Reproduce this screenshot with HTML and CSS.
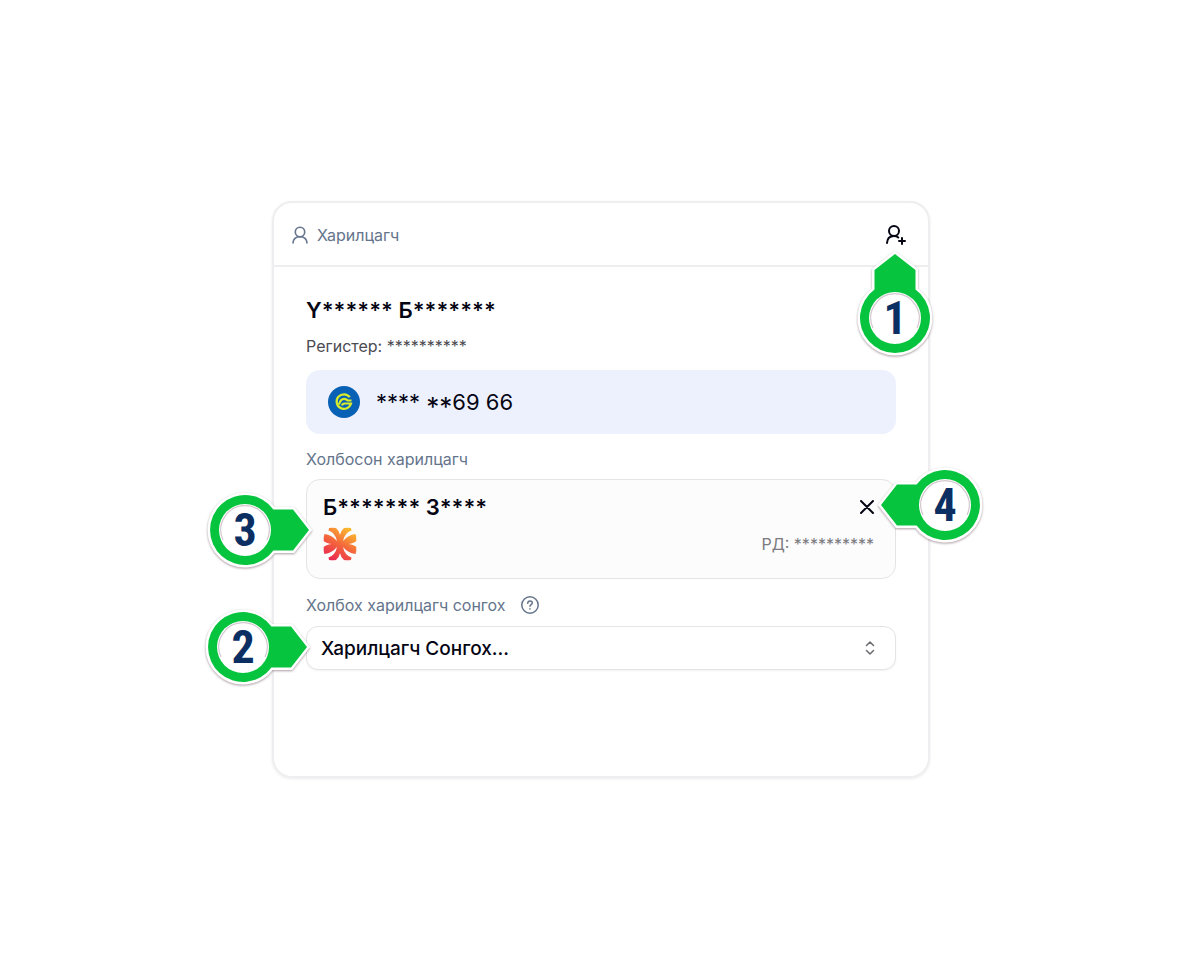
FILE: index.html
```html
<!DOCTYPE html>
<html lang="mn">
<head>
<meta charset="utf-8">
<meta name="viewport" content="width=device-width, initial-scale=1">
<title>Харилцагч</title>
<link rel="stylesheet" href="styles.css">
</head>
<body>
<svg class="defs" aria-hidden="true">
  <defs>
    <linearGradient id="flame" gradientUnits="userSpaceOnUse" x1="8" y1="32" x2="26" y2="2">
      <stop offset="0" stop-color="#ea2a50"/>
      <stop offset="0.5" stop-color="#f4683c"/>
      <stop offset="1" stop-color="#fbb92f"/>
    </linearGradient>
    <path id="petal" d="M6 1Q10 .3 13 1 16.500 4 17.200 9V17.200H10Q3 16.500.7 14 .3 10 1.500 7 9 8 14 14 12.500 6 5.500 3.500Z"/>
    <clipPath id="petals">
      <use href="#petal"/>
      <use href="#petal" transform="matrix(-1 0 0 1 34 0)"/>
      <use href="#petal" transform="matrix(1 0 0 -1 0 34)"/>
      <use href="#petal" transform="matrix(-1 0 0 -1 34 34)"/>
    </clipPath>
    <symbol id="pin" viewBox="-68 -68 136 136">
      <path d="M0-64 20.500-48V-28.400A35 35 0 1 1-20.500-28.400V-48Z" fill="#fff" stroke="#fff" stroke-width="5"/>
      <path d="M0-64 20.500-48V-28.400A35 35 0 1 1-20.500-28.400V-48Z" fill="#06c43e"/>
      <circle r="26" fill="#fff"/>
    </symbol>
  </defs>
</svg>
<main class="page">
  <section class="card">
    <header class="card-head">
      <h1 class="card-title">
        <svg class="icon-user" viewBox="0 0 16 18" aria-hidden="true"><circle cx="8" cy="6" r="4.700"/><path d="M1 17c.3-4.200 3-6.300 7-6.300s6.700 2.100 7 6.300"/></svg>
        Харилцагч
      </h1>
      <div class="anchor">
        <button class="icon-button" type="button" aria-label="Харилцагч нэмэх">
          <svg class="icon-add" viewBox="0 0 22 20" aria-hidden="true"><circle cx="9" cy="6" r="5"/><path d="M2 18c.2-4 2.500-7 7-7 2 0 3.200.5 4.300 1.500M17 13v6M14 16h6"/></svg>
        </button>
        <div class="pin pin-up">
          <svg class="pin-shape" aria-hidden="true"><use href="#pin"/></svg>
          <svg class="pin-rim" viewBox="-26 -26 52 52" aria-hidden="true"><path d="M-22 10A24.200 24.200 0 1 1 22 10"/></svg>
          <span class="pin-number">1</span>
        </div>
      </div>
    </header>
    <div class="card-body">
      <h2 class="name">Ү****** Б*******</h2>
      <p class="register">Регистер: **********</p>
      <div class="phone">
        <svg class="operator" viewBox="0 0 32 32" aria-hidden="true">
          <circle cx="16" cy="16" r="16" fill="#0861b4"/>
          <path d="M21.800 11.200A7.300 7.300 0 1 0 23 17.500H17M11 18.500C12 15 13.500 12.800 16 12.800c2 0 2.500 1 4 1.700h3.500M14 19.500c.2-1.500 1.200-2 3-2" fill="none" stroke="#d9ec2b" stroke-width="2.200"/>
        </svg>
        <span>**** <span class="low-mask">**</span>69 66</span>
      </div>
      <h3 class="label">Холбосон харилцагч</h3>
      <article class="linked">
        <div class="linked-row">
          <h4 class="linked-name">Б******* З****</h4>
          <button class="icon-button" type="button" aria-label="Салгах">
            <svg class="icon-close" viewBox="0 0 14 14" aria-hidden="true"><path d="M1 1l12 12M13 1L1 13"/></svg>
          </button>
        </div>
        <div class="linked-row">
          <svg class="brand" viewBox="0 0 34 34" aria-hidden="true">
            <rect width="34" height="34" fill="url(#flame)" clip-path="url(#petals)"/>
          </svg>
          <span class="linked-id">РД: **********</span>
        </div>
        <div class="pin pin-left">
          <svg class="pin-shape" aria-hidden="true"><use href="#pin" transform="rotate(90 68 68)"/></svg>
          <svg class="pin-rim" viewBox="-26 -26 52 52" aria-hidden="true"><path d="M-22 10A24.200 24.200 0 1 1 22 10"/></svg>
          <span class="pin-number">3</span>
        </div>
        <div class="pin pin-right">
          <svg class="pin-shape" aria-hidden="true"><use href="#pin" transform="rotate(-90 68 68)"/></svg>
          <svg class="pin-rim" viewBox="-26 -26 52 52" aria-hidden="true"><path d="M-22 10A24.200 24.200 0 1 1 22 10"/></svg>
          <span class="pin-number">4</span>
        </div>
      </article>
      <div class="label label-row">
        <label for="customer">Холбох харилцагч сонгох</label>
        <svg class="icon-help" viewBox="0 0 18 18" aria-hidden="true"><circle cx="9" cy="9" r="8.200"/><path d="M6.700 7.200c.1-1.400 1-2.200 2.300-2.200s2.300.8 2.300 2c0 1.600-2.300 1.700-2.300 3.300M9 12.800v.3"/></svg>
      </div>
      <div class="select-box">
        <select id="customer" class="select">
          <option>Харилцагч Сонгох...</option>
        </select>
        <svg class="icon-sort" viewBox="0 0 10 14" aria-hidden="true"><path d="M1.500 4.500L5 1l3.500 3.500M1.500 9.500L5 13l3.500-3.500"/></svg>
        <div class="pin pin-left">
          <svg class="pin-shape" aria-hidden="true"><use href="#pin" transform="rotate(90 68 68)"/></svg>
          <svg class="pin-rim" viewBox="-26 -26 52 52" aria-hidden="true"><path d="M-22 10A24.200 24.200 0 1 1 22 10"/></svg>
          <span class="pin-number">2</span>
        </div>
      </div>
    </div>
  </section>
</main>
</body>
</html>
```
FILE: styles.css
```css
* { box-sizing: border-box; }
body {
  margin: 0;
  background: #fff;
  color: #050514;
  font-family: Inter, "Noto Sans", sans-serif;
}
h1, h2, h3, h4, p { margin: 0; font-weight: 400; }
svg { display: block; flex: none; }
.defs { position: absolute; width: 0; height: 0; }
.page {
  display: flex;
  justify-content: center;
  padding: 201px 0 178px 2px;
}
.card {
  width: 100%;
  max-width: 658px;
  border: 2px solid #eeeef0;
  border-radius: 20px;
  box-shadow: 0 1px 3px #00000014;
}
.card-head {
  display: flex;
  align-items: center;
  justify-content: space-between;
  height: 64px;
  padding: 2px 21px 0 18px;
  border-bottom: 2px solid #eeeef0;
}
.card-title {
  display: flex;
  align-items: center;
  gap: 9px;
  font-size: 16px;
  line-height: 24px;
  color: #64748b;
}
.icon-user, .icon-add, .icon-close, .icon-help, .icon-sort {
  fill: none;
  stroke: currentColor;
  stroke-linecap: round;
  stroke-linejoin: round;
}
.icon-user { width: 16px; height: 18px; stroke-width: 1.6; }
.icon-add { width: 22px; height: 20px; stroke-width: 2; }
.icon-close { width: 14px; height: 14px; stroke-width: 2; }
.icon-help { width: 18px; height: 18px; stroke-width: 1.5; }
.icon-button {
  display: block;
  padding: 0;
  border: 0;
  background: none;
  color: #050514;
}
.anchor { position: relative; }
.card-body { padding: 27px 32px 106px; }
.name { font-size: 22px; line-height: 32px; font-weight: 600; }
.register {
  margin-top: 8px;
  font-size: 16px;
  line-height: 24px;
  color: #4b4b52;
}
.phone {
  display: flex;
  align-items: center;
  gap: 16px;
  height: 64px;
  margin-top: 12px;
  padding: 0 22px;
  border-radius: 14px;
  background: #edf1fe;
  font-size: 22px;
}
.low-mask { font-size: 26px; line-height: 16px; vertical-align: -6px; }
.operator { width: 32px; height: 32px; }
.label {
  margin-top: 13px;
  font-size: 16px;
  line-height: 24px;
  color: #64748b;
}
.label-row { display: flex; align-items: center; gap: 15px; margin-top: 14px; }
.linked {
  position: relative;
  display: grid;
  gap: 2px;
  height: 100px;
  margin-top: 8px;
  padding: 10px 21px 16px 16px;
  border: 1px solid #e4e4e7;
  border-radius: 14px;
  background: #fcfcfc;
}
.linked-row { display: flex; align-items: center; justify-content: space-between; }
.linked-name { font-size: 22px; line-height: 32px; font-weight: 600; }
.linked-id { font-size: 16px; color: #7a7a80; }
.brand { width: 34px; height: 34px; }
.select-box {
  position: relative;
  display: flex;
  align-items: center;
  margin-top: 9px;
}
.select {
  width: 100%;
  height: 44px;
  padding: 0 40px 0 14px;
  border: 1px solid #e4e4e7;
  border-radius: 12px;
  background: #fff;
  box-shadow: 0 1px 2px #0000000d;
  appearance: none;
  color: #050514;
  font: 500 19px Inter, "Noto Sans", sans-serif;
}
.icon-sort {
  position: absolute;
  right: 21px;
  width: 10px;
  height: 14px;
  stroke-width: 1.5;
  color: #6b6b70;
  pointer-events: none;
}
.pin {
  position: absolute;
  z-index: 1;
  display: grid;
  place-items: center;
  width: 136px;
  height: 136px;
  pointer-events: none;
}
.pin > * { grid-area: 1 / 1; }
.pin-up { top: 25px; left: -58px; }
.linked .pin-left { top: -18px; left: -130px; }
.select-box .pin-left { top: -47px; left: -131px; }
.pin-right { top: -43px; right: -118px; }
.pin-shape { width: 136px; height: 136px; filter: drop-shadow(0 1px 1px #5a3c4b80); }
.pin-rim {
  z-index: 1;
  width: 52px;
  height: 52px;
  fill: none;
  stroke: #d3c8ce;
  stroke-width: 1.2;
}
.pin-number {
  z-index: 2;
  color: #0b2f63;
  font: 700 46px "Liberation Sans Narrow", "Roboto Condensed", "Open Sans Condensed", Roboto, sans-serif;
}
```
